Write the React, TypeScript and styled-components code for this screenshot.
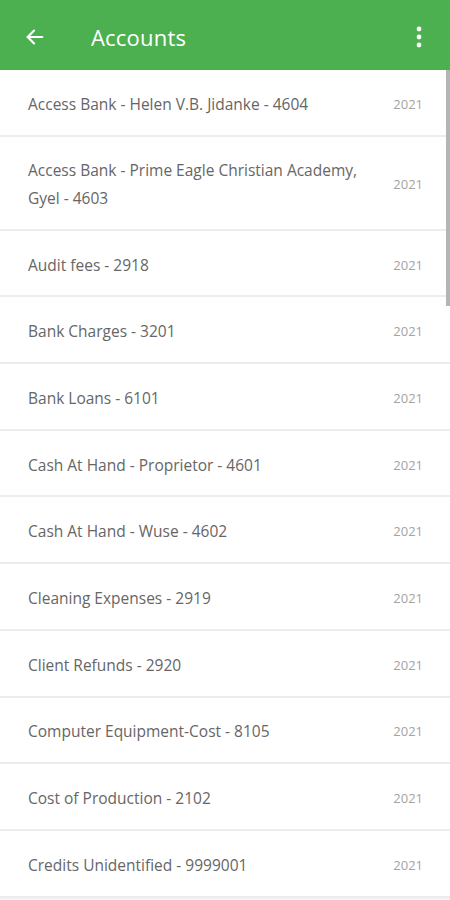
import React from 'react';
import styled, { createGlobalStyle } from 'styled-components';

interface Account {
  id: string;
  name: string;
  year: string;
}

const accounts: Account[] = [
  { id: '4604', name: 'Access Bank - Helen V.B. Jidanke - 4604', year: '2021' },
  { id: '4603', name: 'Access Bank - Prime Eagle Christian Academy, Gyel - 4603', year: '2021' },
  { id: '2918', name: 'Audit fees - 2918', year: '2021' },
  { id: '3201', name: 'Bank Charges - 3201', year: '2021' },
  { id: '6101', name: 'Bank Loans - 6101', year: '2021' },
  { id: '4601', name: 'Cash At Hand - Proprietor - 4601', year: '2021' },
  { id: '4602', name: 'Cash At Hand - Wuse - 4602', year: '2021' },
  { id: '2919', name: 'Cleaning Expenses - 2919', year: '2021' },
  { id: '2920', name: 'Client Refunds - 2920', year: '2021' },
  { id: '8105', name: 'Computer Equipment-Cost - 8105', year: '2021' },
  { id: '2102', name: 'Cost of Production - 2102', year: '2021' },
  { id: '9999001', name: 'Credits Unidentified - 9999001', year: '2021' },
];

const GlobalStyle = createGlobalStyle`
  html, body {
    margin: 0;
    padding: 0;
    background: #f5f5f5;
    font-family: "Open Sans", Lato, sans-serif;
  }
`;

const Screen = styled.div`
  width: 450px;
  height: 900px;
  display: flex;
  flex-direction: column;
  overflow: hidden;
  background: #f5f5f5;
`;

const AppBar = styled.header`
  height: 70px;
  flex-shrink: 0;
  background: #4caf50;
  display: flex;
  align-items: center;
  padding: 3px 18px 0 22px;
  box-sizing: border-box;
`;

const IconButton = styled.button`
  width: 26px;
  height: 26px;
  padding: 0;
  border: none;
  background: none;
  display: flex;
  align-items: center;
  justify-content: center;
  color: #fff;
`;

const Title = styled.h1`
  flex: 1;
  margin: 0 0 0 43px;
  color: #fff;
  font-size: 22px;
  font-weight: 500;
  letter-spacing: 0.2px;
`;

const ListWrap = styled.div`
  position: relative;
  background: #fff;
`;

const ScrollThumb = styled.div`
  position: absolute;
  top: 0;
  right: 0;
  width: 4px;
  height: 236px;
  background: #b4b4b4;
`;

const Row = styled.div<{ $tall?: boolean }>`
  display: flex;
  align-items: center;
  justify-content: space-between;
  gap: 24px;
  height: ${(p) => (p.$tall ? '94px' : '66.7px')};
  padding: 3px 27px 0 28px;
  border-bottom: 2px solid #ececec;
  box-sizing: border-box;
`;

const Name = styled.span`
  font-size: 15.5px;
  color: #666;
  line-height: 28px;
  max-width: 340px;
`;

const Year = styled.span`
  font-size: 13px;
  color: #a4a4a4;
  flex-shrink: 0;
`;

const App: React.FC = () => {
  return (
    <Screen>
      <GlobalStyle />
      <AppBar>
        <IconButton aria-label="Back">
          <svg width="22" height="22" viewBox="0 0 24 24" fill="none" stroke="#fff" strokeWidth="2.4" strokeLinecap="round" strokeLinejoin="round">
            <path d="M20 12H4" />
            <path d="M11 5l-7 7 7 7" />
          </svg>
        </IconButton>
        <Title>Accounts</Title>
        <IconButton aria-label="More">
          <svg width="6" height="22" viewBox="0 0 6 22" fill="#fff">
            <circle cx="3" cy="3" r="2.4" />
            <circle cx="3" cy="11" r="2.4" />
            <circle cx="3" cy="19" r="2.4" />
          </svg>
        </IconButton>
      </AppBar>
      <ListWrap>
        {accounts.map((a, i) => (
          <Row key={a.id} $tall={i === 1}>
            <Name>{a.name}</Name>
            <Year>{a.year}</Year>
          </Row>
        ))}
        <ScrollThumb />
      </ListWrap>
    </Screen>
  );
};

export default App;
